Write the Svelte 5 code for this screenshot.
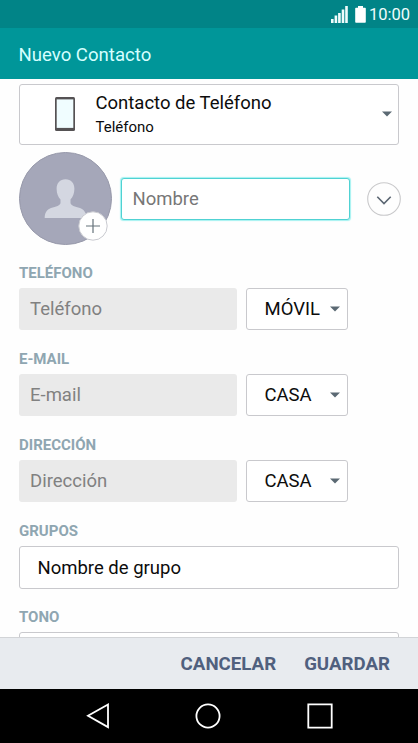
<script>
  const fields = [
    { label: 'TELÉFONO', hint: 'Teléfono', type: 'MÓVIL' },
    { label: 'E-MAIL', hint: 'E-mail', type: 'CASA' },
    { label: 'DIRECCIÓN', hint: 'Dirección', type: 'CASA' }
  ];
</script>

{#snippet arrow()}
  <svg class="arrow" width="10" height="6" viewBox="0 0 10 6"><path d="M0 .4h10L5 5.4z" fill="#5b6973" /></svg>
{/snippet}

<div class="screen">
  <div class="status">
    <svg class="signal" width="17" height="17" viewBox="0 0 17 17" fill="#effcfc">
      <path d="M0 13h2.6v4H0zM3.6 9.6h2.6V17H3.6zM7.1 7h2.6v10H7.1zM10.7 3.500h2.600V17h-2.600zM14.200 0h2.600v17h-2.600z" />
    </svg>
    <svg class="battery" width="11" height="17" viewBox="0 0 11 17" fill="#fff">
      <path d="M3 0h5v1.700h2q.8 0 .8.8V16q0 .8-.8.8H1q-.8 0-.8-.8V2.500q0-.8.8-.8h2z" />
    </svg>
    <span class="clock">10:00</span>
  </div>
  <header><span>Nuevo Contacto</span></header>

  <main>
    <div class="box account">
      <svg class="phone" width="20" height="34" viewBox="0 0 20 34">
        <rect width="20" height="34" rx="1.500" fill="#555254" />
        <rect x="1.700" y="2.400" width="16.600" height="28.500" fill="#f0fdff" />
      </svg>
      <div class="account-text">
        <span class="title">Contacto de Teléfono</span>
        <span class="subtitle">Teléfono</span>
      </div>
      {@render arrow()}
    </div>

    <div class="person">
      <div class="avatar">
        <svg width="93" height="93" viewBox="0 0 93 93">
          <circle cx="46.500" cy="46.500" r="46" fill="#a5a7b9" stroke="#9799aa" />
          <path d="M46.500 27.200c5.500 0 9 3.900 8.900 9.500-.1 5-1.500 8.200-3.900 10.800v3.200c0 2.800 4.600 3.900 9.500 5.400 4.300 1.400 6.300 5.100 6.300 10H25.700c0-4.900 2-8.600 6.300-10 4.900-1.500 9.500-2.600 9.500-5.400v-3.200c-2.400-2.600-3.800-5.800-3.900-10.800-.1-5.600 3.400-9.500 8.900-9.500z" fill="#d4d7e1" />
        </svg>
        <svg class="add" width="30" height="30" viewBox="0 0 30 30">
          <circle cx="15" cy="15" r="14.200" fill="#fff" stroke="#c9cad0" />
          <path d="M8 15h14M15 8v14" stroke="#65727b" stroke-width="1.200" />
        </svg>
      </div>
      <div class="name">Nombre</div>
      <svg class="expand" width="34" height="34" viewBox="0 0 34 34" fill="none">
        <circle cx="17" cy="17" r="16.300" stroke="#c9c9cb" stroke-width="1.100" />
        <path d="M10.300 14.700 17 21.500l6.700-6.800" stroke="#5b6672" stroke-width="1.600" />
      </svg>
    </div>

    {#each fields as field}
      <section>
        <h2>{field.label}</h2>
        <div class="row">
          <div class="input">{field.hint}</div>
          <div class="box select"><span>{field.type}</span>{@render arrow()}</div>
        </div>
      </section>
    {/each}
    <section>
      <h2>GRUPOS</h2>
      <div class="box group">Nombre de grupo</div>
    </section>
    <section>
      <h2>TONO</h2>
      <div class="box group"></div>
    </section>
  </main>

  <footer><span class="cancel">CANCELAR</span><span class="save">GUARDAR</span></footer>

  <nav>
    <svg width="26" height="28" viewBox="0 0 26 28"><path d="M23 2.500v22.600L3 13.800z" /></svg>
    <svg width="28" height="28" viewBox="0 0 28 28"><circle cx="14" cy="14" r="11.600" /></svg>
    <svg width="28" height="28" viewBox="0 0 28 28"><path d="M2.300 2.300h23.400v23.400H2.300z" /></svg>
  </nav>
</div>

<style>
  .screen {
    width: 418px;
    height: 743px;
    display: flex;
    flex-direction: column;
    overflow: hidden;
    background: #fefefe;
    color: #0c0c0c;
    font: 18.500px/1.2 Roboto, sans-serif;
    white-space: nowrap;
  }
  .screen * { box-sizing: border-box; }
  svg { display: block; flex: none; }
  .status {
    height: 28px;
    flex: none;
    display: flex;
    align-items: center;
    justify-content: flex-end;
    padding-right: 8px;
    background: #018487;
    color: #effcfc;
  }
  .battery { margin: 0 3px 0 7px; }
  .clock { font-size: 16.500px; width: 41px; padding-top: 2px; }
  header {
    height: 51px;
    flex: none;
    display: flex;
    align-items: center;
    padding: 3px 0 0 18.500px;
    background: #009699;
    color: #d5ffff;
    font-size: 18.600px;
  }
  main {
    flex: 1;
    min-height: 0;
    overflow: hidden;
    padding: 5px 19px 0;
  }
  .box {
    border: 1px solid #c9c9cd;
    border-radius: 3px;
    background: #fff;
  }
  .account {
    height: 61px;
    display: flex;
    align-items: center;
    padding: 0 6px 0 35px;
  }
  .account .phone { margin-top: -1px; }
  .account .arrow { margin-top: -1px; }
  .account-text {
    flex: 1;
    display: flex;
    flex-direction: column;
    padding: 2px 0 0 20.500px;
  }
  .subtitle { font-size: 15px; line-height: 24px; }
  .person {
    height: 93px;
    margin-top: 7px;
    display: flex;
    align-items: center;
  }
  .avatar { position: relative; width: 93px; height: 93px; flex: none; margin-left: -0.500px; }
  .add { position: absolute; left: 59px; top: 59px; }
  .name {
    width: 229px;
    height: 42px;
    margin: 0 17.500px 0 9px;
    padding: 2px 11px 0;
    display: flex;
    align-items: center;
    flex: none;
    border: 1.500px solid #50d2d3;
    border-radius: 3px;
    box-shadow: 0 0 1px 0.500px #a5f2f1;
    background: #fff;
    color: #777;
  }
  section { height: 86px; }
  h2 {
    height: 42.500px;
    margin: 0;
    padding-top: 19px;
    font-size: 15px;
    line-height: 18px;
    font-weight: 700;
    color: #8fa6b1;
  }
  .row { display: flex; gap: 9px; }
  .input {
    width: 218px;
    height: 42px;
    display: flex;
    align-items: center;
    padding: 2px 0 0 11px;
    border-radius: 3px;
    background: #eaeaea;
    color: #818181;
  }
  .select {
    width: 102px;
    height: 42px;
    display: flex;
    align-items: center;
    justify-content: space-between;
    padding: 0 7px 0 17.500px;
  }
  .select span { padding-top: 2px; }
  .group {
    height: 43px;
    display: flex;
    align-items: center;
    padding: 2px 0 0 17.500px;
  }
  footer {
    height: 52px;
    flex: none;
    display: flex;
    align-items: center;
    justify-content: flex-end;
    gap: 28px;
    padding: 2px 28px 0 0;
    border-top: 1px solid #d2d4d7;
    background: #e8ebef;
    color: #50607e;
    font-size: 18.700px;
    font-weight: 700;
  }
  nav {
    height: 54px;
    flex: none;
    display: flex;
    align-items: center;
    padding-left: 85px;
    gap: 83.300px;
    background: #000;
  }
  nav svg { fill: none; stroke: #fff; stroke-width: 1.800; }
</style>
